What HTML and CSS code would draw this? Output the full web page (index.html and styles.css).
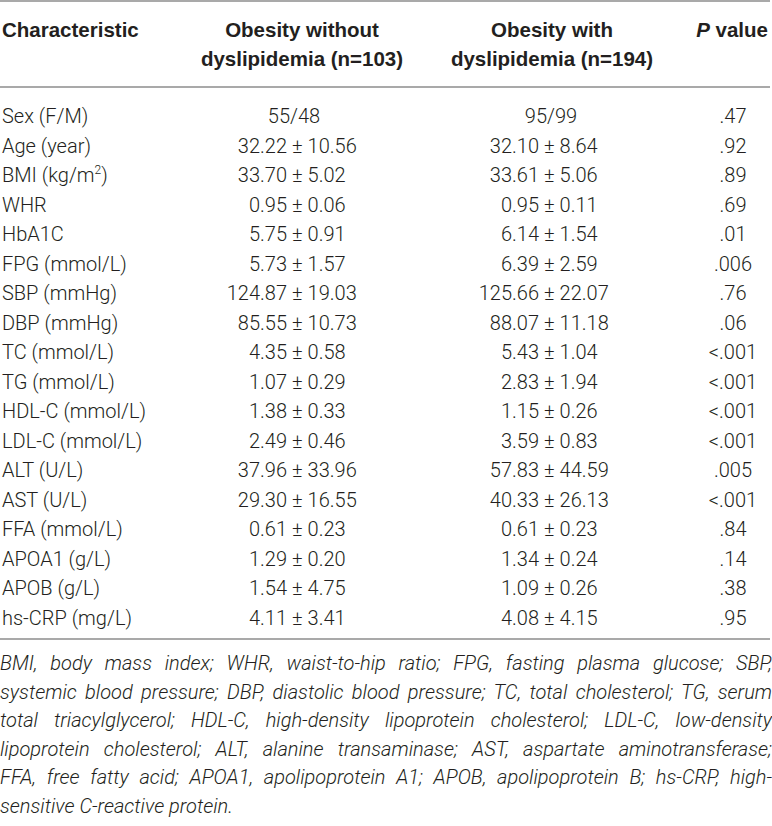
FILE: index.html
```html
<!DOCTYPE html>
<html>
<head>
<meta charset="utf-8">
<link rel="stylesheet" href="styles.css">
</head>
<body>
<div class="table">
  <div class="hdr">
    <div class="h c1">Characteristic</div>
    <div class="h c2">Obesity without<br>dyslipidemia (n=103)</div>
    <div class="h c3">Obesity with<br>dyslipidemia (n=194)</div>
    <div class="h c4"><i>P</i> value</div>
  </div>
  <div class="rows">
    <div class="n">Sex (F/M)</div><div class="s s2">55/48</div><div class="s s3">95/99</div><div class="p">.47</div>
    <div class="n">Age (year)</div><div class="v v2"><span class="a">32.22</span><span>±</span><span>10.56</span></div><div class="v v3"><span class="a">32.10</span><span>±</span><span>8.64</span></div><div class="p">.92</div>
    <div class="n">BMI (kg/m<sup>2</sup>)</div><div class="v v2"><span class="a">33.70</span><span>±</span><span>5.02</span></div><div class="v v3"><span class="a">33.61</span><span>±</span><span>5.06</span></div><div class="p">.89</div>
    <div class="n">WHR</div><div class="v v2"><span class="a">0.95</span><span>±</span><span>0.06</span></div><div class="v v3"><span class="a">0.95</span><span>±</span><span>0.11</span></div><div class="p">.69</div>
    <div class="n">HbA1C</div><div class="v v2"><span class="a">5.75</span><span>±</span><span>0.91</span></div><div class="v v3"><span class="a">6.14</span><span>±</span><span>1.54</span></div><div class="p">.01</div>
    <div class="n">FPG (mmol/L)</div><div class="v v2"><span class="a">5.73</span><span>±</span><span>1.57</span></div><div class="v v3"><span class="a">6.39</span><span>±</span><span>2.59</span></div><div class="p">.006</div>
    <div class="n">SBP (mmHg)</div><div class="v v2"><span class="a">124.87</span><span>±</span><span>19.03</span></div><div class="v v3"><span class="a">125.66</span><span>±</span><span>22.07</span></div><div class="p">.76</div>
    <div class="n">DBP (mmHg)</div><div class="v v2"><span class="a">85.55</span><span>±</span><span>10.73</span></div><div class="v v3"><span class="a">88.07</span><span>±</span><span>11.18</span></div><div class="p">.06</div>
    <div class="n">TC (mmol/L)</div><div class="v v2"><span class="a">4.35</span><span>±</span><span>0.58</span></div><div class="v v3"><span class="a">5.43</span><span>±</span><span>1.04</span></div><div class="p">&lt;.001</div>
    <div class="n">TG (mmol/L)</div><div class="v v2"><span class="a">1.07</span><span>±</span><span>0.29</span></div><div class="v v3"><span class="a">2.83</span><span>±</span><span>1.94</span></div><div class="p">&lt;.001</div>
    <div class="n">HDL-C (mmol/L)</div><div class="v v2"><span class="a">1.38</span><span>±</span><span>0.33</span></div><div class="v v3"><span class="a">1.15</span><span>±</span><span>0.26</span></div><div class="p">&lt;.001</div>
    <div class="n">LDL-C (mmol/L)</div><div class="v v2"><span class="a">2.49</span><span>±</span><span>0.46</span></div><div class="v v3"><span class="a">3.59</span><span>±</span><span>0.83</span></div><div class="p">&lt;.001</div>
    <div class="n">ALT (U/L)</div><div class="v v2"><span class="a">37.96</span><span>±</span><span>33.96</span></div><div class="v v3"><span class="a">57.83</span><span>±</span><span>44.59</span></div><div class="p">.005</div>
    <div class="n">AST (U/L)</div><div class="v v2"><span class="a">29.30</span><span>±</span><span>16.55</span></div><div class="v v3"><span class="a">40.33</span><span>±</span><span>26.13</span></div><div class="p">&lt;.001</div>
    <div class="n">FFA (mmol/L)</div><div class="v v2"><span class="a">0.61</span><span>±</span><span>0.23</span></div><div class="v v3"><span class="a">0.61</span><span>±</span><span>0.23</span></div><div class="p">.84</div>
    <div class="n">APOA1 (g/L)</div><div class="v v2"><span class="a">1.29</span><span>±</span><span>0.20</span></div><div class="v v3"><span class="a">1.34</span><span>±</span><span>0.24</span></div><div class="p">.14</div>
    <div class="n">APOB (g/L)</div><div class="v v2"><span class="a">1.54</span><span>±</span><span>4.75</span></div><div class="v v3"><span class="a">1.09</span><span>±</span><span>0.26</span></div><div class="p">.38</div>
    <div class="n">hs-CRP (mg/L)</div><div class="v v2"><span class="a">4.11</span><span>±</span><span>3.41</span></div><div class="v v3"><span class="a">4.08</span><span>±</span><span>4.15</span></div><div class="p">.95</div>
  </div>
</div>
<div class="note">
  <span class="ln">BMI, body mass index; WHR, waist-to-hip ratio; FPG, fasting plasma glucose; SBP,</span>
  <span class="ln">systemic blood pressure; DBP, diastolic blood pressure; TC, total cholesterol; TG, serum</span>
  <span class="ln">total triacylglycerol; HDL-C, high-density lipoprotein cholesterol; LDL-C, low-density</span>
  <span class="ln">lipoprotein cholesterol; ALT, alanine transaminase; AST, aspartate aminotransferase;</span>
  <span class="ln">FFA, free fatty acid; APOA1, apolipoprotein A1; APOB, apolipoprotein B; hs-CRP, high-</span>
  <span class="ln last">sensitive C-reactive protein.</span>
</div>
</body>
</html>
```

FILE: styles.css
```css
html, body {
  margin: 0;
  padding: 0;
  background: #ffffff;
}

body {
  width: 772px;
  color: #231f20;
  font-family: Roboto, "Liberation Sans", sans-serif;
  font-weight: 300;
}

.table {
  width: 770px;
  border-top: 2px solid #a9a9a9;
  border-bottom: 2px solid #a9a9a9;
}

.hdr {
  display: grid;
  grid-template-columns: 200px 204px 296px 70px;
  padding: 13px 0 13px;
  border-bottom: 2px solid #a9a9a9;
  font-family: "Liberation Sans", Arial, sans-serif;
  font-weight: 700;
  font-size: 20.5px;
  line-height: 29px;
}

.h {
  white-space: nowrap;
}

.c1 {
  padding-left: 2px;
}

.c2, .c3 {
  text-align: center;
}

.c4 {
  justify-self: end;
  padding-right: 2px;
}

.rows {
  display: grid;
  grid-template-columns: 200px 204px 296px 70px;
  grid-auto-rows: 29.5px;
  padding: 14px 0 5px;
  font-size: 20px;
  line-height: 29.5px;
}

.n {
  padding-left: 2px;
  white-space: nowrap;
}

.n sup {
  font-size: 12px;
  line-height: 0;
  vertical-align: 8px;
}

.s {
  text-align: center;
}

.s2 {
  padding-right: 16px;
}

.s3 {
  padding-right: 2px;
}

.v {
  display: grid;
  column-gap: 5px;
  white-space: nowrap;
}

.v .a {
  text-align: right;
}

.v2 {
  grid-template-columns: 87px auto 1fr;
}

.v3 {
  grid-template-columns: 135px auto 1fr;
}

.p {
  text-align: center;
  padding-right: 4px;
}

.note {
  padding-top: 9px;
  font-size: 20px;
  font-style: italic;
  font-weight: 300;
  line-height: 28.6px;
}

.ln {
  display: block;
  white-space: nowrap;
  text-align: justify;
  text-align-last: justify;
}

.ln.last {
  text-align-last: left;
}
```
